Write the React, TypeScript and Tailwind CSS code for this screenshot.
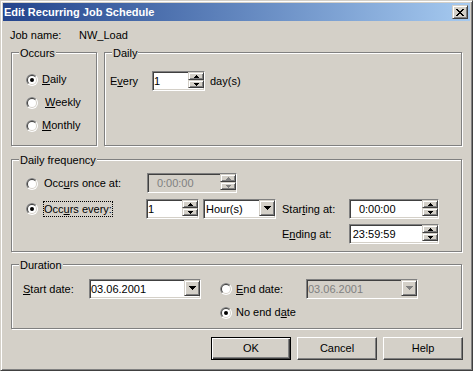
import type { ReactNode } from "react";

const sunken =
  "border border-t-[#808080] border-l-[#808080] border-r-white border-b-white shadow-[inset_1px_1px_0_#404040,inset_-1px_-1px_0_#d4d0c8]";
const raised =
  "border border-t-[#d4d0c8] border-l-[#d4d0c8] border-r-[#404040] border-b-[#404040] shadow-[inset_1px_1px_0_#fff,inset_-1px_-1px_0_#808080] bg-[#d4d0c8]";

function Radio({ checked }: { checked?: boolean }) {
  return (
    <svg width="12" height="12" viewBox="0 0 12 12" className="block shrink-0">
      <circle cx="6" cy="6" r="6" fill="#fff" />
      <path d="M1.757 10.243A6 6 0 0 1 10.243 1.757Z" fill="#808080" />
      <circle cx="6" cy="6" r="5" fill="#d4d0c8" />
      <path d="M2.464 9.536A5 5 0 0 1 9.536 2.464Z" fill="#404040" />
      <circle cx="6" cy="6" r="4" fill="#fff" />
      {checked && <circle cx="6" cy="6" r="2" fill="#000" />}
    </svg>
  );
}

function SpinArrow({ down, disabled }: { down?: boolean; disabled?: boolean }) {
  const d = down ? "M0 0h5v1H4v1H3v1H2V2H1V1H0z" : "M2 0h1v1h1v1h1v1H0V2h1V1h1z";
  return (
    <svg width="5" height="3" viewBox="0 0 5 3" className="block" shapeRendering="crispEdges">
      <path d={d} fill={disabled ? "#808080" : "#000"} />
    </svg>
  );
}

function Spin({ disabled }: { disabled?: boolean }) {
  return (
    <div className="flex w-[16px] shrink-0 flex-col">
      <div className={`${raised} flex h-[8px] items-center justify-center`}>
        <SpinArrow disabled={disabled} />
      </div>
      <div className={`${raised} flex h-[8px] items-center justify-center`}>
        <SpinArrow down disabled={disabled} />
      </div>
    </div>
  );
}

function DropButton({ disabled }: { disabled?: boolean }) {
  return (
    <div className={`${raised} flex h-[16px] w-[16px] shrink-0 items-center justify-center`}>
      <svg width="7" height="4" viewBox="0 0 7 4" className="block" shapeRendering="crispEdges">
        <path
          d="M0 0h7v1H6v1H5v1H4v1H3V3H2V2H1V1H0z"
          fill={disabled ? "#808080" : "#000"}
        />
      </svg>
    </div>
  );
}

function Group({ label, className, children }: { label: string; className: string; children?: ReactNode }) {
  return (
    <div className={`relative border border-[#808080] shadow-[1px_1px_0_#fff,inset_1px_1px_0_#fff] ${className}`}>
      <span className="absolute -top-[6px] left-[7px] bg-[#d4d0c8] px-[1px]">{label}</span>
      {children}
    </div>
  );
}

function Time({ h, rest, disabled, className }: { h: string; rest: string; disabled?: boolean; className: string }) {
  return (
    <div
      className={`${sunken} flex h-[20px] shrink-0 ${disabled ? "bg-[#d4d0c8] text-[#808080]" : "bg-white"} ${className}`}
    >
      <div className="flex flex-1 items-center pl-[2px]">
        <span className="inline-block w-[13px] text-right">{h}</span>
        {rest}
      </div>
      <Spin disabled={disabled} />
    </div>
  );
}

function Button({ label, primary }: { label: string; primary?: boolean }) {
  const frame = primary
    ? "border border-black shadow-[inset_1px_1px_0_#fff,inset_-1px_-1px_0_#404040,inset_-2px_-2px_0_#808080]"
    : "border border-t-white border-l-white border-r-[#404040] border-b-[#404040] shadow-[inset_-1px_-1px_0_#808080]";
  return (
    <div className={`${frame} flex h-[23px] w-[80px] items-center justify-center bg-[#d4d0c8]`}>{label}</div>
  );
}

export default function App() {
  return (
    <div className="flex h-[371px] w-[473px] flex-col border border-t-[#d4d0c8] border-l-[#d4d0c8] border-r-[#404040] border-b-[#404040] bg-[#d4d0c8] p-[2px] font-['Liberation_Sans',Arial,sans-serif] text-[11px] leading-[13px] text-black shadow-[inset_1px_1px_0_#fff,inset_-1px_-1px_0_#808080]">
      <div className="flex h-[18px] shrink-0 items-center bg-gradient-to-r from-[#24448c] to-[#a6caf0] pl-[1px] pr-[2px]">
        <span className="flex-1 font-bold text-white">Edit Recurring Job Schedule</span>
        <div className={`${raised} flex h-[14px] w-[16px] items-center justify-center`}>
          <svg width="8" height="7" viewBox="0 0 8 7" className="block" shapeRendering="crispEdges">
            <path
              d="M0 0h2v1H0zM6 0h2v1H6zM1 1h2v1H1zM5 1h2v1H5zM2 2h4v1H2zM3 3h2v1H3zM2 4h4v1H2zM1 5h2v1H1zM5 5h2v1H5zM0 6h2v1H0zM6 6h2v1H6z"
              fill="#000"
            />
          </svg>
        </div>
      </div>

      <div className="flex flex-col pl-[8px] pr-[8px]">
        <div className="-ml-[1px] mt-[8px] flex h-[13px]">
          <span className="w-[69px]">Job name:</span>
          <span>NW_Load</span>
        </div>

        <div className="mt-[10px] flex gap-[7px]">
          <Group label="Occurs" className="h-[94px] w-[86px] shrink-0">
            <div className="flex flex-col gap-[10px] pl-[14px] pt-[20px]">
              <div className="flex h-[13px] items-center gap-[4px]">
                <Radio checked />
                <span>
                  <u>D</u>aily
                </span>
              </div>
              <div className="flex h-[13px] items-center gap-[4px]">
                <Radio />
                <span className="ml-[3px]">
                  <u>W</u>eekly
                </span>
              </div>
              <div className="flex h-[13px] items-center gap-[4px]">
                <Radio />
                <span>
                  <u>M</u>onthly
                </span>
              </div>
            </div>
          </Group>

          <Group label="Daily" className="h-[94px] flex-1">
            <div className="flex items-center pl-[5px] pt-[18px]">
              <span className="w-[42px] shrink-0">
                E<u>v</u>ery
              </span>
              <div className={`${sunken} flex h-[20px] w-[53px] shrink-0 bg-white`}>
                <div className="flex flex-1 items-center pl-[1px]">1</div>
                <Spin />
              </div>
              <span className="ml-[5px]">day(s)</span>
            </div>
          </Group>
        </div>

        <Group label="Daily frequency" className="mt-[13px] h-[93px]">
          <div className="flex flex-col pl-[14px] pt-[13px]">
            <div className="flex items-start">
              <div className="mt-[4px] flex h-[13px] w-[121px] shrink-0 items-center gap-[6px]">
                <Radio />
                <span>
                  Occ<u>u</u>rs once at:
                </span>
              </div>
              <Time h="0" rest=":00:00" disabled className="w-[90px]" />
            </div>

            <div className="mt-[6px] flex items-center">
              <div className="flex w-[120px] shrink-0 items-center gap-[5px]">
                <Radio checked />
                <span className="flex h-[16px] items-center border border-dotted border-black">
                  Occ<u>u</u>rs every:
                </span>
              </div>
              <div className={`${sunken} flex h-[20px] w-[53px] shrink-0 bg-white`}>
                <div className="flex flex-1 items-center pl-[1px]">1</div>
                <Spin />
              </div>
              <div className={`${sunken} ml-[4px] flex h-[20px] w-[73px] shrink-0 bg-white`}>
                <div className="flex flex-1 items-center pl-[2px]">Hour(s)</div>
                <DropButton />
              </div>
              <span className="ml-[6px] w-[67px] shrink-0">
                Star<u>t</u>ing at:
              </span>
              <Time h="0" rest=":00:00" className="w-[90px]" />
            </div>

            <div className="mt-[5px] flex items-center pl-[256px]">
              <span className="w-[67px] shrink-0">
                E<u>n</u>ding at:
              </span>
              <Time h="23" rest=":59:59" className="w-[90px]" />
            </div>
          </div>
        </Group>

        <Group label="Duration" className="mt-[12px] h-[65px]">
          <div className="flex flex-col pl-[11px] pt-[14px]">
            <div className="flex items-center">
              <span className="w-[66px] shrink-0">
                <u>S</u>tart date:
              </span>
              <div className={`${sunken} flex h-[20px] w-[112px] shrink-0 bg-white`}>
                <div className="flex flex-1 items-center pl-[1px]">03.06.2001</div>
                <DropButton />
              </div>
              <div className="ml-[19px] flex w-[86px] shrink-0 items-center gap-[4px]">
                <Radio />
                <span>
                  <u>E</u>nd date:
                </span>
              </div>
              <div className={`${sunken} flex h-[20px] w-[112px] shrink-0 bg-[#d4d0c8] text-[#808080]`}>
                <div className="flex flex-1 items-center pl-[1px]">03.06.2001</div>
                <DropButton disabled />
              </div>
            </div>
            <div className="ml-[197px] mt-[7px] flex h-[13px] items-center gap-[4px]">
              <Radio checked />
              <span>
                No end d<u>a</u>te
              </span>
            </div>
          </div>
        </Group>

        <div className="-mr-[1px] mt-[8px] flex justify-end gap-[6px]">
          <Button label="OK" primary />
          <Button label="Cancel" />
          <Button label="Help" />
        </div>
      </div>
    </div>
  );
}
